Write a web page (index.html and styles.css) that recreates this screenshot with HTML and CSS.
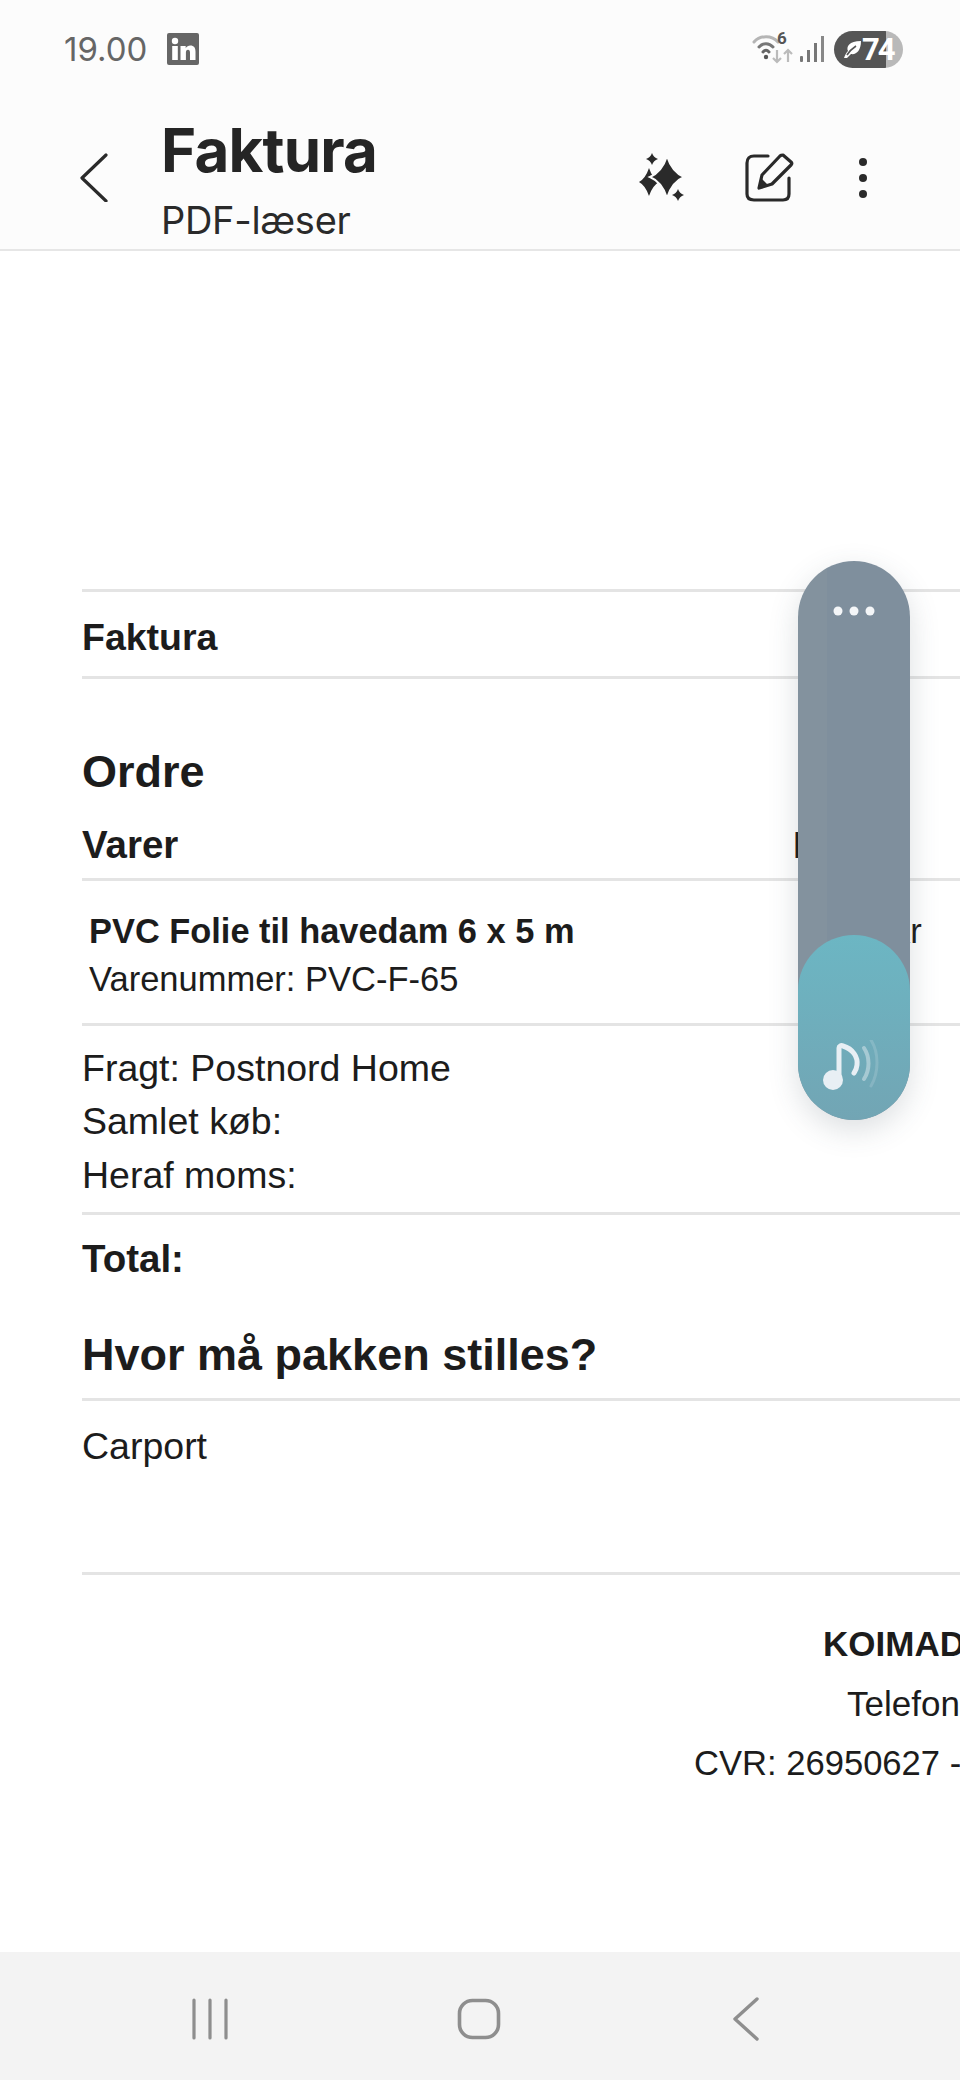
FILE: index.html
```html
<!DOCTYPE html>
<html lang="da">
<head>
<meta charset="utf-8">
<title>Faktura</title>
<link rel="stylesheet" href="styles.css">
</head>
<body>
<div class="screen">
  <header class="top">
    <div class="status">
      <span class="time">19.00</span>
      <svg class="li" viewBox="0 0 32 32"><rect width="32" height="32" rx="2" fill="#666"/><circle cx="8" cy="8" r="3.200" fill="#fff"/><rect x="5.200" y="13" width="5.600" height="14" fill="#fff"/><path d="M13.500 13h5.200v2.200c1-1.600 2.700-2.600 4.600-2.600 3.600 0 5.200 2.200 5.200 6V27h-5.500v-7.400c0-1.900-.6-2.900-2-2.900-1.500 0-2.100 1.100-2.100 2.900V27h-5.400z" fill="#fff"/></svg>
      <div class="status-right">
        <svg class="net" viewBox="0 0 46 36">
          <path d="M4 9c6-7 18-7 24 0" fill="none" stroke="#b5b5b5" stroke-width="3" stroke-linecap="round"/>
          <path d="M9 14c4-4.500 10-4.500 14 0" fill="none" stroke="#777" stroke-width="3" stroke-linecap="round"/>
          <path d="M13 19c2-2.200 4-2.200 6 0" fill="none" stroke="#666" stroke-width="3" stroke-linecap="round"/>
          <circle cx="16" cy="24" r="2.200" fill="#555"/>
          <path d="M27 17v12m-4-4l4 4 4-4" fill="none" stroke="#bbb" stroke-width="2.200"/>
          <path d="M38 29V17m-4 4l4-4 4 4" fill="none" stroke="#bbb" stroke-width="2.200"/>
        </svg>
        <span class="six">6</span>
        <svg class="signal" viewBox="0 0 24 26"><rect x="0" y="20" width="3" height="6" rx="1" fill="#777"/><rect x="7" y="14" width="3" height="12" fill="#777"/><rect x="14" y="7" width="3" height="19" fill="#777"/><rect x="21" y="0" width="3" height="26" fill="#888"/></svg>
        <div class="battery">
          <svg class="leaf" viewBox="0 0 20 20"><path d="M2 19c1-3 2-5 4-7C4 8 7 2 19 2c0 10-5 14-10 13l-4 4z" fill="#fff"/><path d="M5 16C8 11 11 9 14 7" stroke="#555" stroke-width="1.600" fill="none"/></svg>
          <span class="level">74</span>
        </div>
      </div>
    </div>
    <div class="appbar">
      <svg class="back" viewBox="0 0 30 50"><path d="M27 3L3 26l24 23" fill="none" stroke="#2a2a2a" stroke-width="3.200" stroke-linecap="round" stroke-linejoin="round"/></svg>
      <div class="titles">
        <div class="app-title">Faktura</div>
        <div class="app-sub">PDF-læser</div>
      </div>
      <div class="actions">
        <svg class="spark" viewBox="0 0 54 55">
          <path d="M13 18Q16.500 28.500 23 32Q16.500 35.500 13 46Q9.500 35.500 3 32Q9.500 28.500 13 18Z" fill="#2a2a2a"/>
          <path d="M31 6Q36 22 48 27Q36 32 31 48Q26 32 14 27Q26 22 31 6Z" fill="#2a2a2a" stroke="#fcfcfc" stroke-width="2"/>
          <path d="M16 3Q17.500 7.500 22 9Q17.500 10.500 16 15Q14.500 10.500 10 9Q14.500 7.500 16 3Z" fill="#2a2a2a"/>
          <path d="M42 39Q43.500 43.500 48 45Q43.500 46.500 42 51Q40.500 46.500 36 45Q40.500 43.500 42 39Z" fill="#2a2a2a"/>
        </svg>
        <svg class="edit" viewBox="0 0 50 50">
          <path d="M24 3H10C5.500 3 3 5.500 3 10v31c0 4.500 2.500 6 7 6h29c4.500 0 6-2 6-6V25" fill="none" stroke="#2a2a2a" stroke-width="3.200" stroke-linecap="round"/>
          <path d="M39 2l8 7c1 1 1 2 0 3L28 31l-13 4 3-13L36 3c1-1 2-1 3-1z" fill="none" stroke="#2a2a2a" stroke-width="3.200" stroke-linejoin="round"/>
          <path d="M15 35l3-9 6 6z" fill="#2a2a2a"/>
        </svg>
        <svg class="kebab" viewBox="0 0 10 42"><circle cx="5" cy="5" r="4" fill="#2a2a2a"/><circle cx="5" cy="21" r="4" fill="#2a2a2a"/><circle cx="5" cy="37" r="4" fill="#2a2a2a"/></svg>
      </div>
    </div>
  </header>

  <main class="doc">
    <section class="block-faktura rule-top rule-bottom"><span class="label">Faktura</span></section>
    <h2 class="h-ordre">Ordre</h2>
    <div class="cols head rule-bottom">
      <span class="label label-wide">Varer</span>
      <span class="label">Pris</span>
    </div>
    <div class="cols item rule-bottom">
      <div class="item-text">
        <div class="item-name">PVC Folie til havedam 6 x 5 m</div>
        <div class="item-no">Varenummer: PVC-F-65</div>
      </div>
      <span class="item-price">kr</span>
    </div>
    <div class="sums rule-bottom">
      <div>Fragt: Postnord Home</div>
      <div>Samlet køb:</div>
      <div>Heraf moms:</div>
    </div>
    <div class="total"><span class="label label-wide">Total:</span></div>
    <h2 class="h-where rule-bottom">Hvor må pakken stilles?</h2>
    <div class="place rule-bottom">Carport</div>
    <div class="foot">
      <div class="foot-name">KOIMAD</div>
      <div class="foot-phone">Telefon</div>
      <div class="foot-cvr">CVR: 26950627 -</div>
    </div>
  </main>

  <nav class="nav">
    <svg class="nav-recent" viewBox="0 0 36 42"><path d="M2 2v38M18 2v38M34 2v38" stroke="#8e8e8e" stroke-width="3.200" stroke-linecap="round" fill="none"/></svg>
    <svg class="nav-home" viewBox="0 0 44 42"><rect x="2.500" y="2.500" width="39" height="37" rx="13" fill="none" stroke="#8e8e8e" stroke-width="3.600"/></svg>
    <svg class="nav-back" viewBox="0 0 30 44"><path d="M27 2L5 22l22 20" fill="none" stroke="#8e8e8e" stroke-width="3.400" stroke-linecap="round" stroke-linejoin="round"/></svg>
  </nav>

  <aside class="reader">
    <svg class="reader-dots" viewBox="0 0 42 10"><circle cx="5" cy="5" r="4.500" fill="#f4f6f8"/><circle cx="21" cy="5" r="4.500" fill="#f4f6f8"/><circle cx="37" cy="5" r="4.500" fill="#f4f6f8"/></svg>
    <div class="reader-play">
      <svg class="reader-note" viewBox="0 0 62 52">
        <circle cx="10" cy="40" r="10" fill="#e8eff4"/>
        <path d="M16 40V8c0-2 2-3 4-2 10 3 15 11 14 19-.3 3-1.500 6-3 8" fill="none" stroke="#e8eff4" stroke-width="5" stroke-linecap="round"/>
        <path d="M41 8c6 9 6 22 0 31" fill="none" stroke="#e8eff4" stroke-opacity=".45" stroke-width="4" stroke-linecap="round"/>
        <path d="M48 0c8 13 8 32 0 46" fill="none" stroke="#e8eff4" stroke-opacity=".18" stroke-width="3" stroke-linecap="round"/>
      </svg>
    </div>
  </aside>
</div>
</body>
</html>
```

FILE: styles.css
```css
* { box-sizing: border-box; }
html, body { margin: 0; padding: 0; background: #fff; }
.screen {
  position: relative;
  width: 960px;
  height: 2080px;
  overflow: hidden;
  display: flex;
  flex-direction: column;
  background: #fff;
}

/* top bars */
.top { background: #fcfcfc; height: 251px; border-bottom: 2px solid #e6e6e6; flex: none; }
.status { height: 100px; display: flex; align-items: center; padding: 0 57px 2px 64px; }
.time { font: 400 33px/1 Inter, sans-serif; color: #666; width: 103px; }
.li { width: 32px; height: 32px; }
.status-right { margin-left: auto; display: flex; align-items: center; position: relative; }
.net { width: 46px; height: 36px; margin-right: 4px; margin-top: 4px; }
.six { position: absolute; left: 27px; top: 1px; font: 700 17px/1 Roboto, sans-serif; color: #555; }
.signal { width: 24px; height: 26px; margin: 0 10px 0 0; }
.battery {
  width: 69px;
  height: 37px;
  border-radius: 19px;
  display: flex;
  align-items: center;
  padding-left: 8px;
  background: linear-gradient(90deg, #555 0, #555 52px, #b9b9b9 52px, #b9b9b9 100%);
}
.leaf { width: 20px; height: 20px; }
.level { font: 700 31px/1 Roboto, sans-serif; color: #fff; letter-spacing: -2px; }

.appbar { height: 149px; display: flex; align-items: flex-start; padding: 0 0 0 79px; }
.back { width: 30px; height: 50px; margin-top: 52px; flex: none; }
.titles { margin-left: 52px; }
.app-title { font: 700 60px/70px Inter, sans-serif; color: #252525; margin-top: 15px; letter-spacing: -.8px; }
.app-sub { font: 400 38px/44px Inter, sans-serif; color: #2a2a2a; margin-top: 13px; letter-spacing: -.3px; }
.actions { margin-left: auto; display: flex; align-items: center; margin-top: 50px; padding-right: 92px; }
.spark { width: 54px; height: 55px; margin-right: 54px; }
.edit { width: 50px; height: 50px; margin-right: 64px; }
.kebab { width: 10px; height: 42px; }

/* document */
.doc {
  flex: 1;
  padding: 338px 0 0 82px;
  width: 1200px;
  color: #1c1c1c;
  font-family: "Liberation Sans", Arial, sans-serif;
  font-size: 37.500px;
}
.rule-top { border-top: 3px solid #e4e4e4; }
.rule-bottom { border-bottom: 3px solid #e4e4e4; }
.label { font-weight: 700; font-size: 37.500px; }
.label-wide { font-size: 38.500px; }
.block-faktura { height: 90px; display: flex; align-items: center; padding-top: 7px; }
.h-ordre { margin: 0; height: 128px; padding-top: 67px; font-size: 45px; line-height: 52px; font-weight: 700; }
.cols { display: grid; grid-template-columns: 711px 1fr; }
.head { height: 74px; padding-top: 15px; line-height: 46px; }
.item { height: 145px; padding-top: 27px; }
.item-text { padding-left: 7px; }
.item-name { font-weight: 700; font-size: 34.400px; line-height: 46px; }
.item-no { font-size: 34.500px; line-height: 51px; }
.item-price { font-size: 34.500px; line-height: 46px; padding-left: 100px; }
.sums { height: 189px; padding-top: 16px; line-height: 53.300px; }
.total { height: 88px; padding-top: 21px; line-height: 46px; }
.h-where { margin: 0; height: 98px; font-size: 45px; font-weight: 700; padding-top: 26px; line-height: 52px; }
.place { height: 174px; padding-top: 22px; line-height: 46px; }
.foot { padding-top: 46px; white-space: nowrap; font-size: 35px; line-height: 46px; }
.foot-name { padding-left: 741px; font-weight: 700; }
.foot-phone { padding-left: 765px; margin-top: 14px; }
.foot-cvr { padding-left: 612px; margin-top: 13px; font-size: 34.600px; }

/* nav */
.nav {
  position: absolute;
  left: 0;
  right: 0;
  bottom: 0;
  height: 128px;
  background: #f3f3f3;
  display: flex;
  align-items: center;
  gap: 229px;
  padding: 6px 0 0 192px;
}
.nav-recent { width: 36px; height: 42px; }
.nav-home { width: 44px; height: 42px; }
.nav-back { width: 30px; height: 44px; }

/* floating reader */
.reader {
  position: absolute;
  left: 798px;
  top: 561px;
  width: 112px;
  height: 559px;
  border-radius: 56px;
  background: linear-gradient(90deg, #83929e 0, #83929e 26%, #7f8f9d 26%, #7f8f9d 100%);
  box-shadow: 0 10px 30px rgba(60, 80, 90, .18);
}
.reader-dots { position: absolute; left: 35px; top: 45px; width: 42px; height: 10px; }
.reader-play {
  position: absolute;
  left: 0;
  bottom: 0;
  width: 112px;
  height: 185px;
  border-radius: 56px;
  background: linear-gradient(180deg, #6cb6c3 0, #72a5b4 100%);
}
.reader-note { position: absolute; left: 25px; top: 105px; width: 62px; height: 52px; }
```
